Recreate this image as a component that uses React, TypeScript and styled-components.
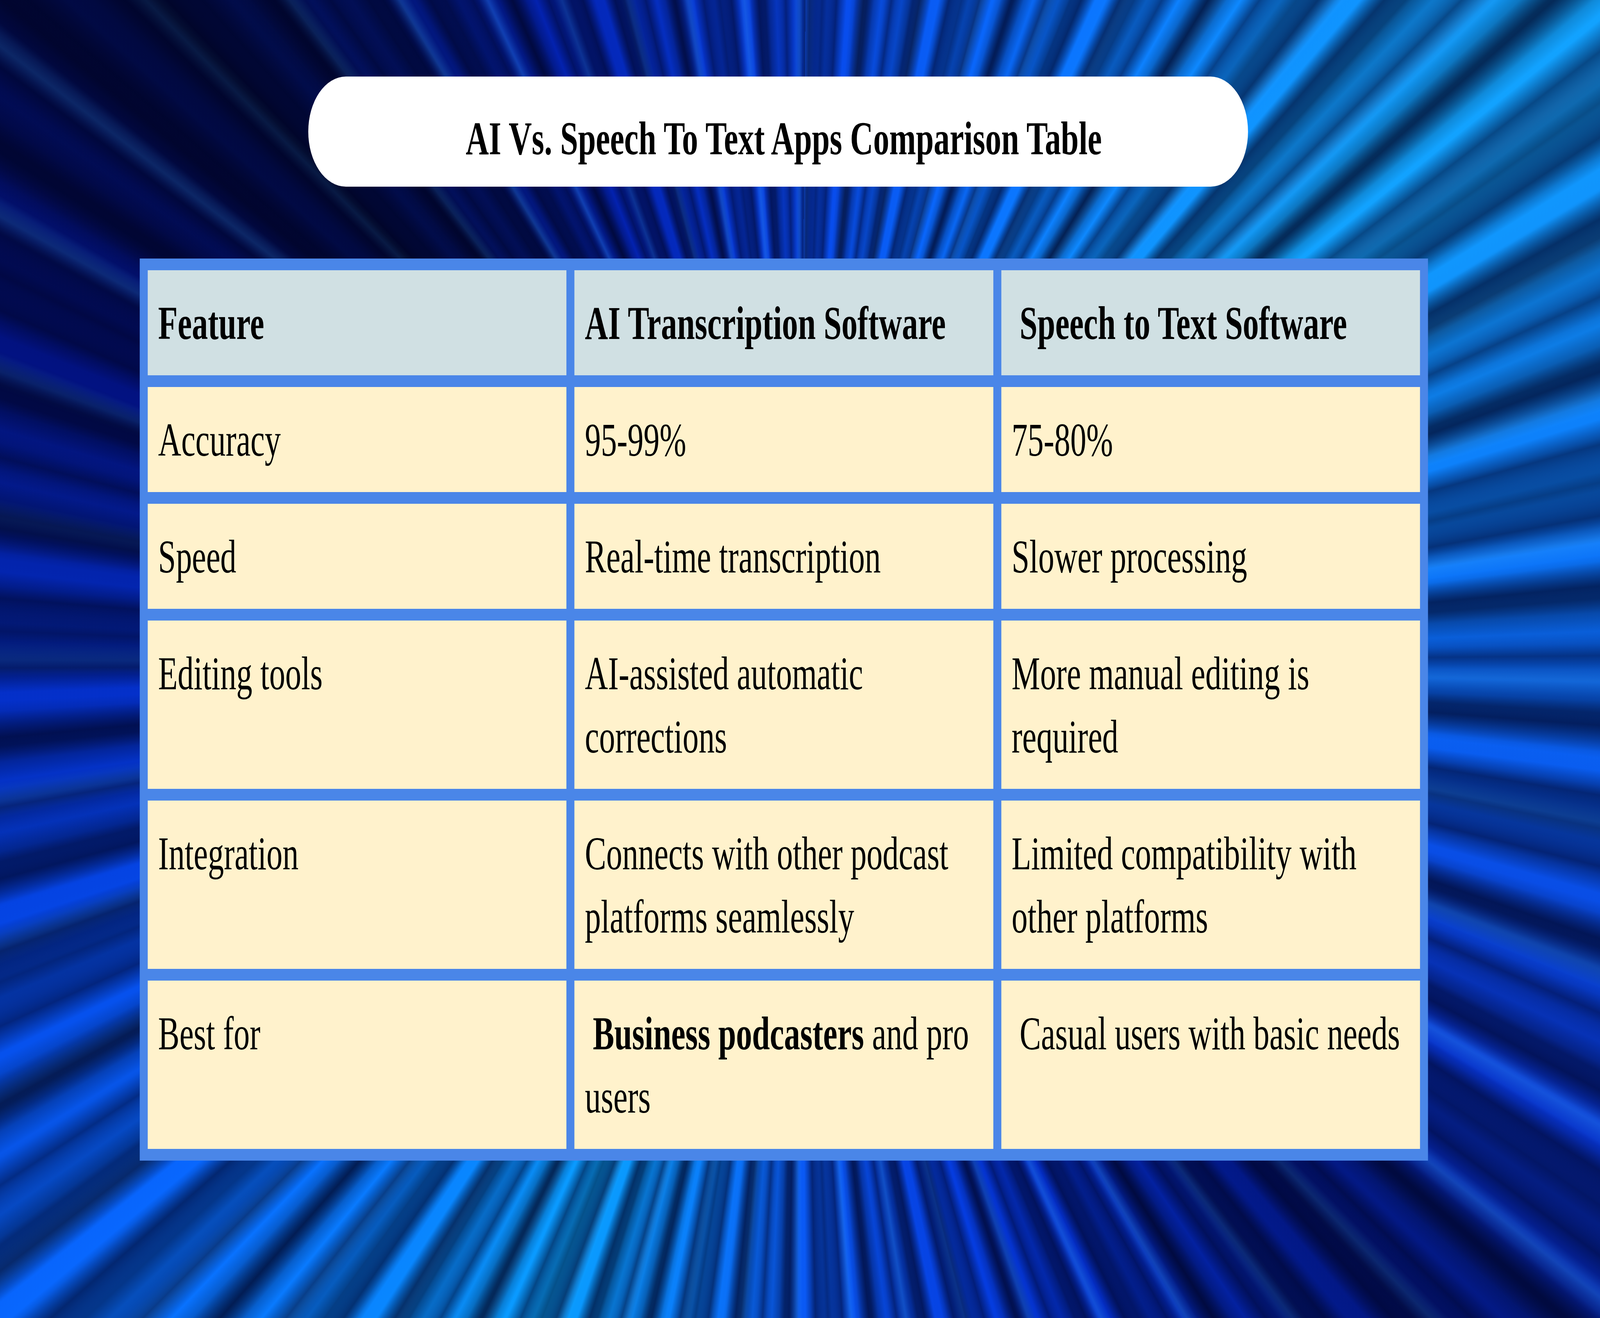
import { useEffect, useState } from 'react'
import styled, { createGlobalStyle } from 'styled-components'

const W = 6000
const H = 3375

const GlobalStyle = createGlobalStyle`
    html, body {
        margin: 0;
        padding: 0;
        overflow: hidden;
        background: #021282;
    }
`

const BURST = '3000px 1700px'

// the slide is drawn at 6000x3375 and fitted to whatever window it gets
const Stage = styled.div`
    width: ${W}px;
    height: ${H}px;
    transform-origin: 0 0;
`

const Page = styled.div`
    width: 100%;
    height: 100%;
    box-sizing: border-box;
    padding-top: 196px;
    overflow: hidden;
    font-family: 'Liberation Serif', 'Times New Roman', serif;
    color: #000;
    background:
        repeating-conic-gradient(from 0deg at ${BURST}, rgba(0, 4, 40, 0) 0deg, rgba(0, 4, 40, 0.55) 1.2deg, rgba(0, 4, 40, 0) 2.5deg, rgba(0, 4, 40, 0) 3.4deg),
        repeating-conic-gradient(from 0.7deg at ${BURST}, rgba(0, 0, 20, 0) 0deg, rgba(0, 0, 20, 0.5) 2.1deg, rgba(0, 0, 20, 0) 4.3deg, rgba(0, 0, 20, 0) 5.6deg),
        repeating-conic-gradient(from 0.3deg at ${BURST}, rgba(60, 170, 255, 0) 0deg, rgba(60, 170, 255, 0.25) 0.8deg, rgba(60, 170, 255, 0) 1.7deg, rgba(60, 170, 255, 0) 6.9deg),
        conic-gradient(from 0deg at ${BURST}, #0844e8 0deg, #0a70ff 30deg, #12a4ff 60deg, #0a6af8 90deg, #0838d8 110deg, #02147a 125deg, #0434d8 150deg, #0a5af5 180deg, #0aa0ff 210deg, #0868ff 240deg, #0436d8 265deg, #021282 285deg, #010838 305deg, #0322b0 330deg, #0844e8 360deg);
`

const TitlePill = styled.div`
    margin-left: 1156px;
    width: 3524px;
    height: 282px;
    box-sizing: border-box;
    padding: 78px 0 0 42px;
    border-radius: 141px;
    background: #fff;
    text-align: center;
    font-size: 120px;
    line-height: 162px;
    font-weight: bold;
`

const Grid = styled.div`
    margin: 184px 0 0 524px;
    width: 4831px;
    box-sizing: border-box;
    display: grid;
    grid-template-columns: repeat(3, 1fr);
    gap: 30px;
    padding: 30px;
    background: #4a86e8;
`

const Cell = styled.div<{ $head?: boolean }>`
    background: ${p => (p.$head ? '#d0e0e3' : '#fff2cc')};
    padding: 55px 39px 52px;
    font-size: 120px;
    line-height: 162px;
    font-weight: ${p => (p.$head ? 'bold' : 'normal')};
`

const Strong = styled.b`
    font-weight: bold;
`

const NB = '\u00a0'

const rows: string[][] = [
    ['Accuracy', '95-99%', '75-80%'],
    ['Speed', 'Real-time transcription', 'Slower processing'],
    ['Editing tools', 'AI-assisted automatic corrections', 'More manual editing is required'],
    ['Integration', 'Connects with other podcast platforms seamlessly', 'Limited compatibility with other platforms'],
]

function fit() {
    return { x: window.innerWidth / W, y: window.innerHeight / H }
}

export default function App() {
    const [scale, setScale] = useState(fit)

    useEffect(() => {
        const onResize = () => setScale(fit())
        window.addEventListener('resize', onResize)
        return () => window.removeEventListener('resize', onResize)
    }, [])

    return (
        <>
            <GlobalStyle />
            <Stage style={{ transform: `scale(${scale.x}, ${scale.y})` }}>
                <Page>
                    <TitlePill>AI Vs. Speech To Text Apps Comparison Table</TitlePill>
                    <Grid>
                        <Cell $head>Feature</Cell>
                        <Cell $head>AI Transcription Software</Cell>
                        <Cell $head>{NB}Speech to Text Software</Cell>
                        {rows.map(r => r.map((txt, i) => <Cell key={r[0] + i}>{txt}</Cell>))}
                        <Cell>Best for</Cell>
                        <Cell>{NB}<Strong>Business podcasters</Strong> and pro users</Cell>
                        <Cell>{NB}Casual users with basic needs</Cell>
                    </Grid>
                </Page>
            </Stage>
        </>
    )
}
